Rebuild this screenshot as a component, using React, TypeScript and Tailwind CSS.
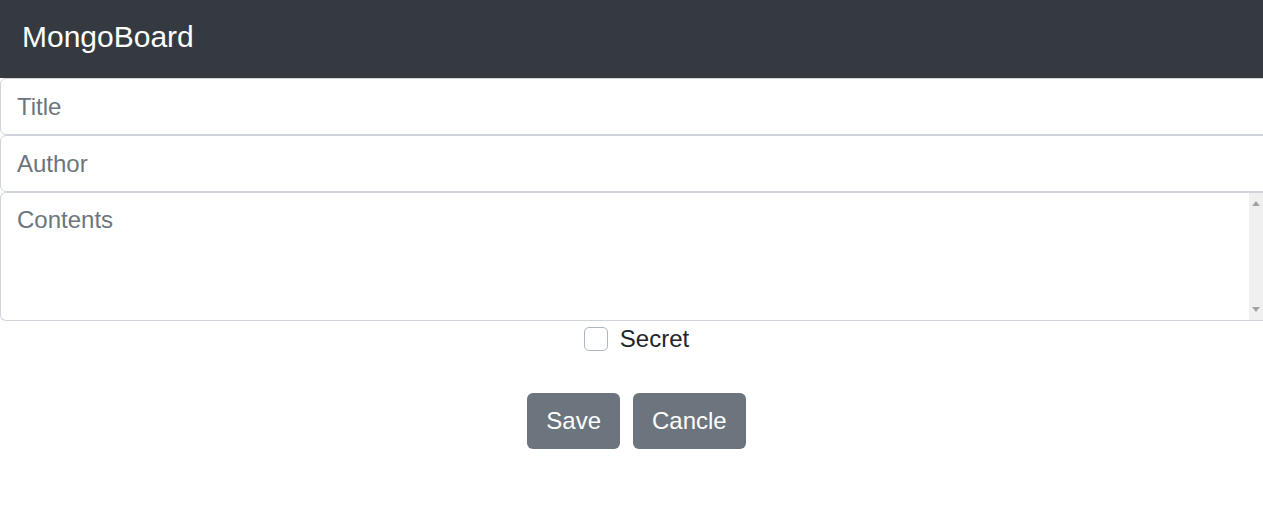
import React from 'react';

const font = { fontFamily: '"Liberation Sans", Arial, sans-serif' };

const App: React.FC = () => {
    return (
        <div className="min-h-screen bg-white overflow-hidden font-['Liberation_Sans',Arial,sans-serif]">
            {/* Navbar */}
            <nav className="h-[78px] bg-[#343a40] flex items-center px-[22px] pb-[6px]">
                <span className="text-white text-[30px] leading-[45px]">MongoBoard</span>
            </nav>

            {/* Form */}
            <div className="w-full overflow-hidden">
                <input
                    type="text"
                    placeholder="Title"
                    className="block w-[calc(100%+8px)] h-[57px] px-[16px] border border-[#ced4da] rounded-l-[6px] text-[24px] text-[#495057] placeholder:text-[#6c757d] outline-none"
                />
                <input
                    type="text"
                    placeholder="Author"
                    className="block w-[calc(100%+8px)] h-[57px] px-[16px] border border-[#ced4da] rounded-l-[6px] text-[24px] text-[#495057] placeholder:text-[#6c757d] outline-none"
                />
                <div className="flex w-full h-[129px] border border-r-0 border-[#ced4da] rounded-l-[6px] overflow-hidden">
                    <textarea
                        placeholder="Contents"
                        className="flex-1 resize-none overflow-hidden px-[16px] pt-[9px] text-[24px] leading-[36px] text-[#495057] placeholder:text-[#6c757d] outline-none"
                    />
                    <div className="w-[14px] bg-[#f0f0f0] flex flex-col items-center justify-between py-[8px]">
                        <svg width="8" height="5" viewBox="0 0 8 5">
                            <polygon points="4,0 8,5 0,5" fill="#a3a3a3" />
                        </svg>
                        <svg width="8" height="5" viewBox="0 0 8 5">
                            <polygon points="0,0 8,0 4,5" fill="#a3a3a3" />
                        </svg>
                    </div>
                </div>
            </div>

            {/* Secret checkbox */}
            <div className="flex justify-center pl-[10px] h-[36px] items-center">
                <label className="flex items-center gap-[12px] text-[24px] leading-[36px] text-[#212529]" style={font}>
                    <span className="w-[24px] h-[24px] rounded-[5px] border border-[#adb5bd] bg-white" />
                    Secret
                </label>
            </div>

            {/* Buttons */}
            <div className="flex justify-center gap-[13px] pl-[10px] mt-[36px]">
                <button className="h-[56px] px-[19px] rounded-[6px] bg-[#6c757d] text-white text-[24px]">Save</button>
                <button className="h-[56px] px-[19px] rounded-[6px] bg-[#6c757d] text-white text-[24px]">Cancle</button>
            </div>
        </div>
    );
};

export default App;
